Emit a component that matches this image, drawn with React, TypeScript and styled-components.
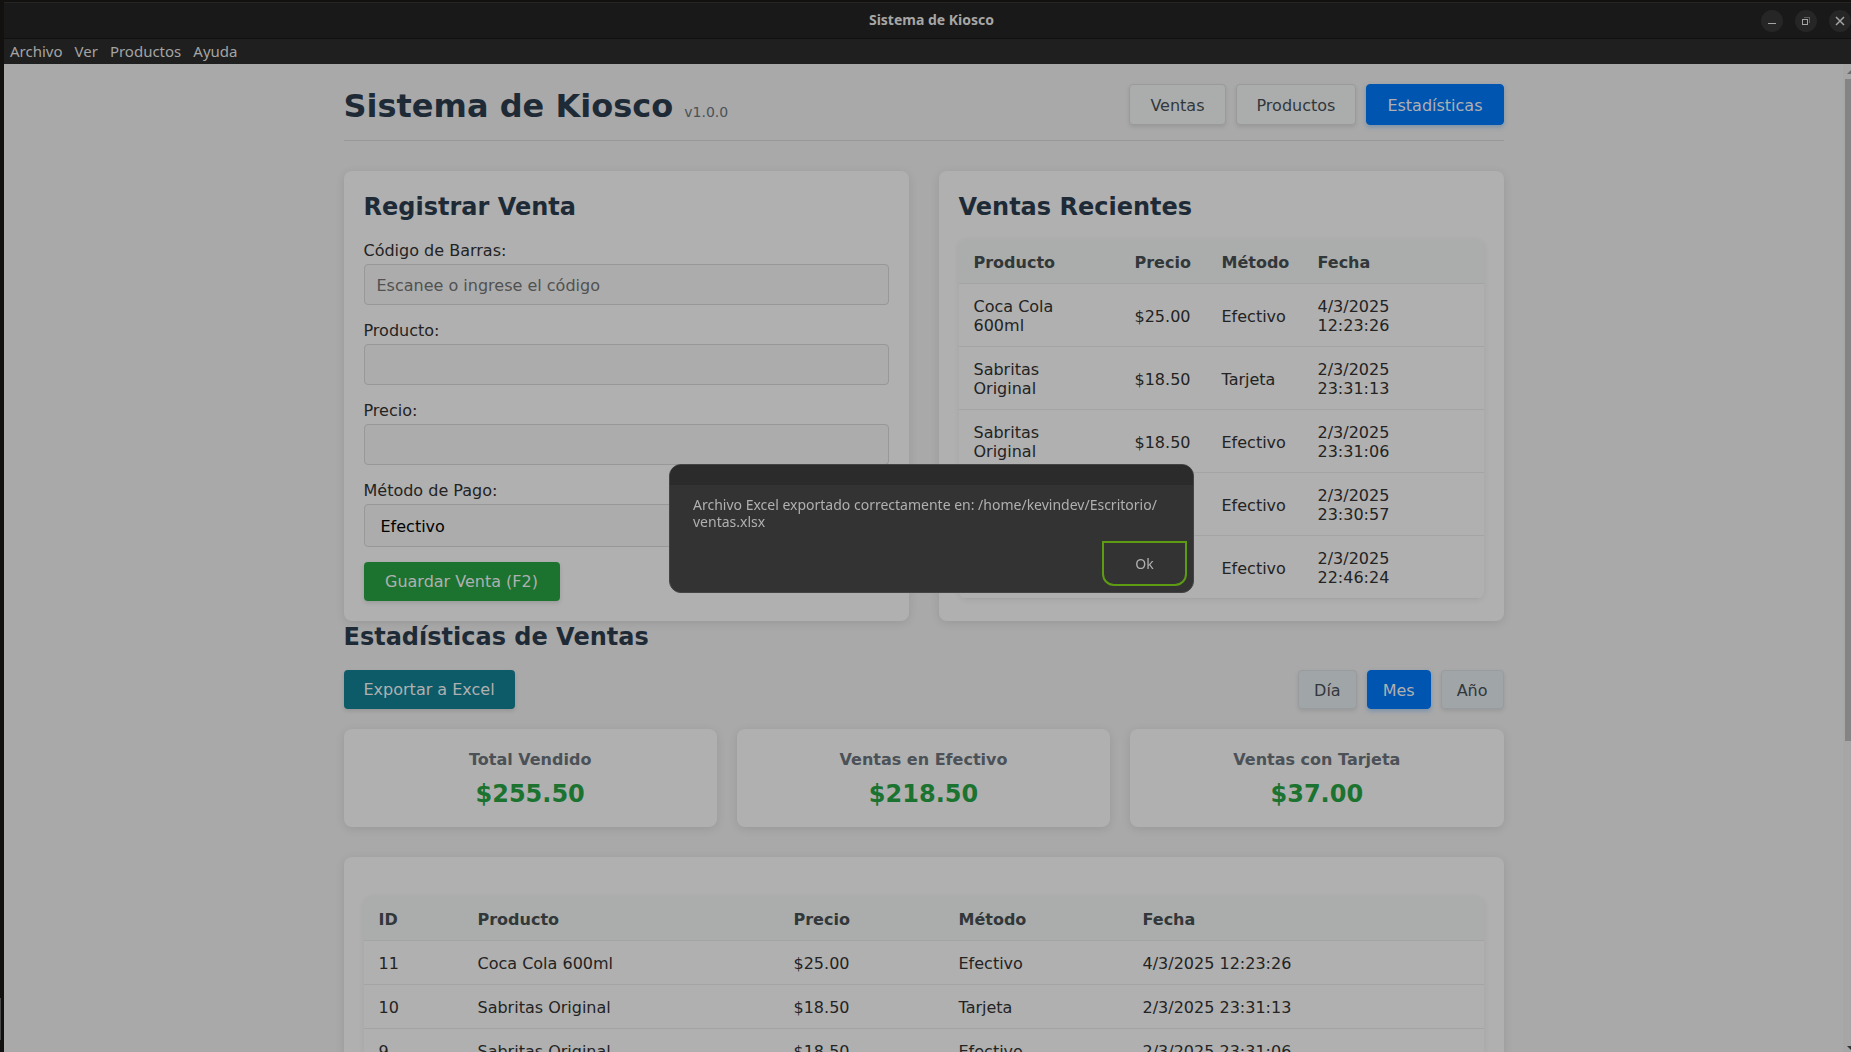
import React from "react";
import styled, { createGlobalStyle, css } from "styled-components";

const uiFont = `"DejaVu Sans", Verdana, sans-serif`;
const shellFont = `"Noto Sans", Ubuntu, sans-serif`;

const GlobalStyle = createGlobalStyle`
  *, *::before, *::after { box-sizing: border-box; }
  html, body, #root { height: 100%; }
  body { margin: 0; overflow: hidden; background: #121110; }
  button, input, select { font: inherit; margin: 0; }
`;

const Desktop = styled.div`
  display: flex;
  height: 100%;
  background: #121110;
`;

const DesktopEdge = styled.div`
  flex: 0 0 4px;
  display: flex;
  align-items: flex-end;
  padding-bottom: 12px;
`;

const DockHandle = styled.div`
  width: 1px;
  height: 42px;
  background: #4a4a4a;
`;

const Window = styled.div`
  flex: 1;
  min-width: 0;
  display: flex;
  flex-direction: column;
  padding-top: 2px;
`;

const TitleBar = styled.header`
  display: grid;
  grid-template-columns: 1fr auto 1fr;
  align-items: center;
  height: 37px;
  padding-left: 8px;
  background: #191919;
  border-top: 1px solid #252525;
  border-bottom: 1px solid #101010;
  font-family: ${shellFont};
`;

const WindowTitle = styled.div`
  grid-column: 2;
  padding-bottom: 1px;
  font-size: 14px;
  font-weight: 700;
  line-height: 20px;
  color: #a6a6a6;
`;

const WindowControls = styled.div`
  display: flex;
  justify-content: flex-end;
  gap: 12px;
`;

const WindowButton = styled.button`
  display: block;
  width: 22px;
  height: 22px;
  padding: 0;
  border: 0;
  border-radius: 50%;
  background: #262626;
  color: #a4a4a4;

  svg { display: block; }
`;

const MenuBar = styled.nav`
  display: flex;
  align-items: center;
  gap: 12px;
  height: 25px;
  padding: 0 6px 2px;
  background: #1f1f1f;
`;

const MenuItem = styled.button`
  padding: 0;
  border: 0;
  background: none;
  color: #a4a4a4;
  font-family: ${shellFont};
  font-size: 15px;
  line-height: 20px;
`;

const Viewport = styled.div`
  flex: 1;
  min-height: 0;
  display: flex;
  background: #a9a9a9;
`;

const Page = styled.main`
  flex: 1;
  min-width: 0;
  overflow: hidden;
  font-family: ${uiFont};
  font-size: 16px;
  line-height: 19px;
  color: #232323;
`;

const Container = styled.div`
  max-width: 1200px;
  margin: 0 auto;
  padding: 20px;
`;

const ScrollTrack = styled.div`
  flex: 0 0 8px;
  display: flex;
  flex-direction: column;
  justify-content: space-between;
  overflow: hidden;
  background: #a6a6a6;
`;

const ScrollArrow = styled.svg`
  display: block;
  flex: none;
  width: 15px;
  height: 15px;
`;

const ScrollThumb = styled.div`
  height: 67%;
  margin: 0 0 auto 2px;
  background: #848484;
`;

const AppHeader = styled.header`
  display: flex;
  align-items: center;
  justify-content: space-between;
  padding-bottom: 15px;
  margin-bottom: 30px;
  border-bottom: 1px solid #989898;
`;

const AppTitle = styled.h1`
  margin: 0;
  padding-top: 4px;
  font-size: 32px;
  line-height: 37px;
  color: #1e2b37;
`;

const Version = styled.span`
  font-size: 14px;
  font-weight: 400;
  line-height: 17px;
  color: #4b5156;
`;

const ButtonRow = styled.div`
  display: flex;
  gap: 10px;
`;

const activeButton = css`
  background: #0055b0;
  border-color: #0055b0;
  color: #b0b0b0;
  box-shadow: 0 2px 5px rgba(0, 85, 176, 0.3);
`;

const TabButton = styled.button<{ $active?: boolean }>`
  padding: 11px 20px 9px;
  border: 1px solid #9a9a9a;
  border-radius: 4px;
  background: #abadac;
  color: #32373c;
  box-shadow: 0 2px 4px rgba(0, 0, 0, 0.1);
  ${(p) => p.$active && activeButton}
`;

const PeriodButton = styled(TabButton)`
  padding: 10px 15px 8px;
  border-color: #999c9e;
  background: #a0a5a8;
  ${(p) => p.$active && activeButton}
`;

const ActionButton = styled.button<{ $tone: "save" | "export" }>`
  min-width: ${(p) => (p.$tone === "save" ? "196px" : "171px")};
  padding: 10px 20px;
  border: 0;
  border-radius: 4px;
  background: ${(p) => (p.$tone === "save" ? "#1c7330" : "#0d5b68")};
  color: #b0b0b0;
  box-shadow: 0 2px 4px rgba(0, 0, 0, 0.12);
`;

const Columns = styled.div`
  display: grid;
  grid-template-columns: 1fr 1fr;
  gap: 30px;
`;

const Card = styled.section`
  padding: 20px;
  border-radius: 8px;
  background: #b0b0b0;
  box-shadow: 0 2px 10px rgba(0, 0, 0, 0.1);
`;

const Heading = styled.h2`
  margin: 0 0 16px;
  font-size: 24px;
  line-height: 33px;
  color: #1e2b37;
`;

const Field = styled.div`
  display: flex;
  flex-direction: column;
  gap: 4px;
  padding-top: 1px;
  margin-bottom: 15px;
`;

const control = css`
  width: 100%;
  border: 1px solid #989898;
  border-radius: 4px;
  background: #acacac;
`;

const TextInput = styled.input`
  ${control}
  height: 41px;
  padding: 11px 12px 9px;
  color: #232323;

  &::placeholder { color: #515151; opacity: 1; }
`;

const SelectInput = styled.select`
  ${control}
  appearance: none;
  height: 43px;
  padding: 11px 16px 9px;
  color: #000;
`;

const DataTable = styled.table`
  width: 100%;
  table-layout: fixed;
  border-collapse: separate;
  border-spacing: 0;
  border-radius: 8px;
  overflow: hidden;
  box-shadow: 0 1px 6px rgba(0, 0, 0, 0.07);

  th, td {
    padding: 13px 15px 11px;
    border-bottom: 1px solid #a3a5a5;
    text-align: left;
    white-space: pre-line;
  }
  th {
    background: #aaadab;
    color: #32373a;
  }
`;

const StatsToolbar = styled.div`
  display: flex;
  align-items: center;
  justify-content: space-between;
  margin-bottom: 20px;
`;

const StatGrid = styled.div`
  display: grid;
  grid-template-columns: repeat(3, 1fr);
  gap: 20px;
  margin-bottom: 30px;
`;

const StatCard = styled(Card)`
  padding: 21px 20px 16px;
  text-align: center;
`;

const StatLabel = styled.h3`
  margin: 0 0 9px;
  font-size: 16px;
  line-height: 19px;
  color: #4b5156;
`;

const StatValue = styled.p`
  margin: 0;
  font-size: 24px;
  font-weight: 700;
  line-height: 33px;
  color: #1c7330;
`;

const HistoryCard = styled(Card)`
  padding-top: 40px;
`;

const DialogLayer = styled.div`
  position: fixed;
  inset: 5px 0 0 12px;
  display: flex;
  align-items: center;
  justify-content: center;
`;

const Dialog = styled.div`
  width: 525px;
  border: 1px solid #444;
  border-radius: 12px;
  overflow: hidden;
  background: #333;
  font-family: ${shellFont};
  font-size: 14px;
  line-height: 17px;
  color: #b0b0b0;
`;

const DialogBar = styled.div`
  height: 20px;
  background: #2b2b2b;
`;

const DialogText = styled.p`
  margin: 0;
  padding: 11px 20px 11px 23px;
`;

const DialogActions = styled.div`
  display: flex;
  justify-content: flex-end;
  padding: 0 6px 6px;
`;

const DialogButton = styled.button`
  width: 85px;
  height: 45px;
  padding: 0;
  border: 2px solid #5d9c12;
  border-radius: 0 0 12px 12px;
  background: transparent;
  color: inherit;
`;

const recent = [
  ["Coca Cola 600ml", "$25.00", "Efectivo", "4/3/2025\n12:23:26"],
  ["Sabritas Original", "$18.50", "Tarjeta", "2/3/2025\n23:31:13"],
  ["Sabritas Original", "$18.50", "Efectivo", "2/3/2025\n23:31:06"],
  ["Sabritas Original", "$18.50", "Efectivo", "2/3/2025\n23:30:57"],
  ["Sabritas Original", "$18.50", "Efectivo", "2/3/2025\n22:46:24"],
];

const history = [
  ["11", "Coca Cola 600ml", "$25.00", "Efectivo", "4/3/2025 12:23:26"],
  ["10", "Sabritas Original", "$18.50", "Tarjeta", "2/3/2025 23:31:13"],
  ["9", "Sabritas Original", "$18.50", "Efectivo", "2/3/2025 23:31:06"],
];

const stats = [
  ["Total Vendido", "$255.50"],
  ["Ventas en Efectivo", "$218.50"],
  ["Ventas con Tarjeta", "$37.00"],
];

const Col = styled.col<{ $width: number }>`
  width: ${(p) => p.$width}px;
`;

type SalesTableProps = { columns: [string, number][]; rows: string[][] };

function SalesTable({ columns, rows }: SalesTableProps) {
  return (
    <DataTable>
      <colgroup>
        {columns.map(([name, width]) => (
          <Col key={name} $width={width} />
        ))}
      </colgroup>
      <thead>
        <tr>
          {columns.map(([name]) => (
            <th key={name} scope="col">{name}</th>
          ))}
        </tr>
      </thead>
      <tbody>
        {rows.map((row, i) => (
          <tr key={i}>
            {row.map((cell, j) => (
              <td key={j}>{cell}</td>
            ))}
          </tr>
        ))}
      </tbody>
    </DataTable>
  );
}

export default function App() {
  return (
    <>
      <GlobalStyle />
      <Desktop>
        <DesktopEdge>
          <DockHandle />
        </DesktopEdge>
        <Window>
          <TitleBar>
            <WindowTitle>Sistema de Kiosco</WindowTitle>
            <WindowControls>
              <WindowButton aria-label="Minimizar">
                <svg width="22" height="22" viewBox="0 0 22 22" shapeRendering="crispEdges">
                  <rect x="7" y="13" width="8" height="1" fill="currentColor" />
                </svg>
              </WindowButton>
              <WindowButton aria-label="Restaurar">
                <svg width="22" height="22" viewBox="0 0 22 22" fill="none" stroke="currentColor" shapeRendering="crispEdges">
                  <path d="M9 7.5h5.500v5.500" stroke="#5e5e5e" />
                  <path d="M7.500 9.500h5v5h-5z" />
                </svg>
              </WindowButton>
              <WindowButton aria-label="Cerrar">
                <svg width="22" height="22" viewBox="0 0 22 22" fill="none" stroke="currentColor" strokeWidth="1.500">
                  <path d="M7 7l8 8M15 7l-8 8" />
                </svg>
              </WindowButton>
            </WindowControls>
          </TitleBar>
          <MenuBar>
            {["Archivo", "Ver", "Productos", "Ayuda"].map((item) => (
              <MenuItem key={item}>{item}</MenuItem>
            ))}
          </MenuBar>
          <Viewport>
            <Page>
              <Container>
                <AppHeader>
                  <AppTitle>
                    Sistema de Kiosco <Version>v1.0.0</Version>
                  </AppTitle>
                  <ButtonRow>
                    <TabButton>Ventas</TabButton>
                    <TabButton>Productos</TabButton>
                    <TabButton $active>Estadísticas</TabButton>
                  </ButtonRow>
                </AppHeader>

                <Columns>
                  <Card>
                    <Heading>Registrar Venta</Heading>
                    <Field>
                      <label htmlFor="codigo">Código de Barras:</label>
                      <TextInput id="codigo" placeholder="Escanee o ingrese el código" />
                    </Field>
                    <Field>
                      <label htmlFor="producto">Producto:</label>
                      <TextInput id="producto" readOnly />
                    </Field>
                    <Field>
                      <label htmlFor="precio">Precio:</label>
                      <TextInput id="precio" readOnly />
                    </Field>
                    <Field>
                      <label htmlFor="metodo">Método de Pago:</label>
                      <SelectInput id="metodo" defaultValue="Efectivo">
                        <option>Efectivo</option>
                        <option>Tarjeta</option>
                      </SelectInput>
                    </Field>
                    <ActionButton $tone="save">Guardar Venta (F2)</ActionButton>
                  </Card>
                  <Card>
                    <Heading>Ventas Recientes</Heading>
                    <SalesTable
                      columns={[["Producto", 161], ["Precio", 87], ["Método", 96], ["Fecha", 181]]}
                      rows={recent}
                    />
                  </Card>
                </Columns>

                <Heading>Estadísticas de Ventas</Heading>
                <StatsToolbar>
                  <ActionButton $tone="export">Exportar a Excel</ActionButton>
                  <ButtonRow>
                    <PeriodButton>Día</PeriodButton>
                    <PeriodButton $active>Mes</PeriodButton>
                    <PeriodButton>Año</PeriodButton>
                  </ButtonRow>
                </StatsToolbar>
                <StatGrid>
                  {stats.map(([label, value]) => (
                    <StatCard key={label}>
                      <StatLabel>{label}</StatLabel>
                      <StatValue>{value}</StatValue>
                    </StatCard>
                  ))}
                </StatGrid>
                <HistoryCard>
                  <SalesTable
                    columns={[["ID", 99], ["Producto", 316], ["Precio", 165], ["Método", 184], ["Fecha", 356]]}
                    rows={history}
                  />
                </HistoryCard>
              </Container>
            </Page>
            <ScrollTrack>
              <ScrollArrow viewBox="0 0 15 15">
                <path d="M4 10l4-4 4 4z" fill="#6a6a6a" />
              </ScrollArrow>
              <ScrollThumb />
              <ScrollArrow viewBox="0 0 15 15">
                <path d="M4 9h8l-4 4z" fill="#333" />
              </ScrollArrow>
            </ScrollTrack>
          </Viewport>
        </Window>
      </Desktop>
      <DialogLayer>
        <Dialog role="dialog" aria-describedby="mensaje">
          <DialogBar />
          <DialogText id="mensaje">
            Archivo Excel exportado correctamente en: /home/kevindev/Escritorio/<wbr />ventas.xlsx
          </DialogText>
          <DialogActions>
            <DialogButton>Ok</DialogButton>
          </DialogActions>
        </Dialog>
      </DialogLayer>
    </>
  );
}
